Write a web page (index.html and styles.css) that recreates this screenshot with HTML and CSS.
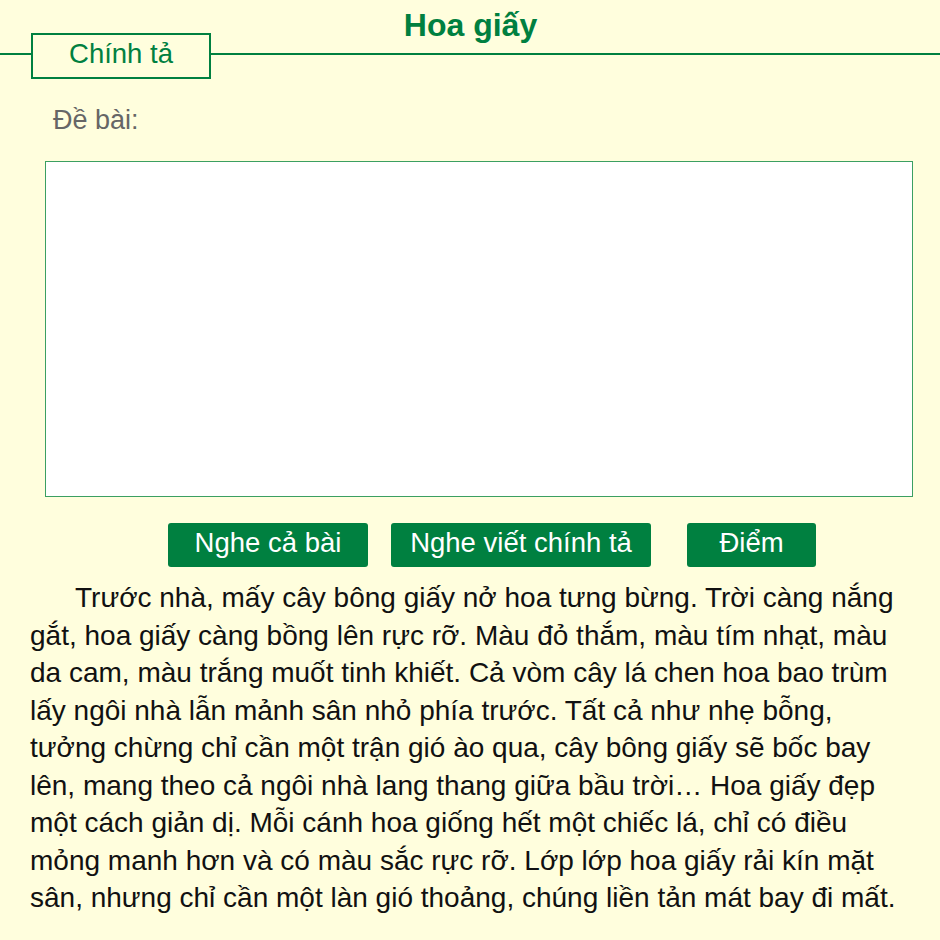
FILE: index.html
```html
<!DOCTYPE html>
<html lang="vi">
<head>
    <meta charset="UTF-8">
    <meta name="viewport" content="width=device-width, initial-scale=1.0">
    <title>Hoa giấy</title>
    <link rel="stylesheet" href="styles.css">
</head>
<body>
    <div class="header">
        <h1>Hoa giấy</h1>
        <div class="rule">
            <span class="tag">Chính tả</span>
        </div>
    </div>

    <div class="task">Đề bài:</div>
    <textarea class="answer"></textarea>

    <div class="actions">
        <button class="btn btn-listen">Nghe cả bài</button>
        <button class="btn btn-dictate">Nghe viết chính tả</button>
        <button class="btn btn-score">Điểm</button>
    </div>

    <p class="passage">Trước nhà, mấy cây bông giấy nở hoa tưng bừng. Trời càng nắng gắt, hoa giấy càng bồng lên rực rỡ. Màu đỏ thắm, màu tím nhạt, màu da cam, màu trắng muốt tinh khiết. Cả vòm cây lá chen hoa bao trùm lấy ngôi nhà lẫn mảnh sân nhỏ phía trước. Tất cả như nhẹ bỗng, tưởng chừng chỉ cần một trận gió ào qua, cây bông giấy sẽ bốc bay lên, mang theo cả ngôi nhà lang thang giữa bầu trời… Hoa giấy đẹp một cách giản dị. Mỗi cánh hoa giống hết một chiếc lá, chỉ có điều mỏng manh hơn và có màu sắc rực rỡ. Lớp lớp hoa giấy rải kín mặt sân, nhưng chỉ cần một làn gió thoảng, chúng liền tản mát bay đi mất.</p>
</body>
</html>
```

FILE: styles.css
```css
body {
    font-family: "Liberation Sans", Arial, sans-serif;
    margin: 0;
    padding: 0;
    background-color: #fffedd; /* светло-кремовый фон */
    color: #111;
}

.header {
    padding-top: 6px;
}

h1 {
    margin: 0;
    text-align: center;
    font-size: 32px;
    line-height: 38px;
    color: #008040;
    padding-left: 1px;
}

.rule {
    position: relative;
    height: 2px;
    margin-top: 9px;
    background-color: #008040;
}

.tag {
    position: absolute;
    left: 31px;
    top: -20px;
    width: 176px;
    height: 42px;
    border: 2px solid #008040;
    background-color: #fffedd;
    color: #008040;
    font-size: 27.5px;
    line-height: 38px;
    text-align: center;
}

.task {
    margin: 50px 0 0 53px;
    font-size: 27px;
    line-height: 30px;
    color: #666;
}

.answer {
    display: block;
    width: 868px;
    height: 336px;
    margin: 26px 0 0 45px;
    border: 1px solid #3b9f62;
    background-color: #fff;
    box-sizing: border-box;
    resize: none;
    outline: none;
}

.actions {
    display: flex;
    gap: 23px;
    margin: 26px 0 0 168px;
}

.btn {
    height: 44px;
    border: none;
    border-radius: 3px;
    background-color: #008040;
    color: #fff;
    font-family: "Liberation Sans", Arial, sans-serif;
    font-size: 27.5px;
    padding: 0 0 4px;
    cursor: pointer;
}

.btn-listen { width: 200px; }
.btn-dictate { width: 260px; }
.btn-score { width: 129px; margin-left: 13px; }

.passage {
    margin: 12px 0 0 30px;
    width: 876px;
    font-size: 28px;
    line-height: 37.5px;
    text-indent: 45px;
}
```
